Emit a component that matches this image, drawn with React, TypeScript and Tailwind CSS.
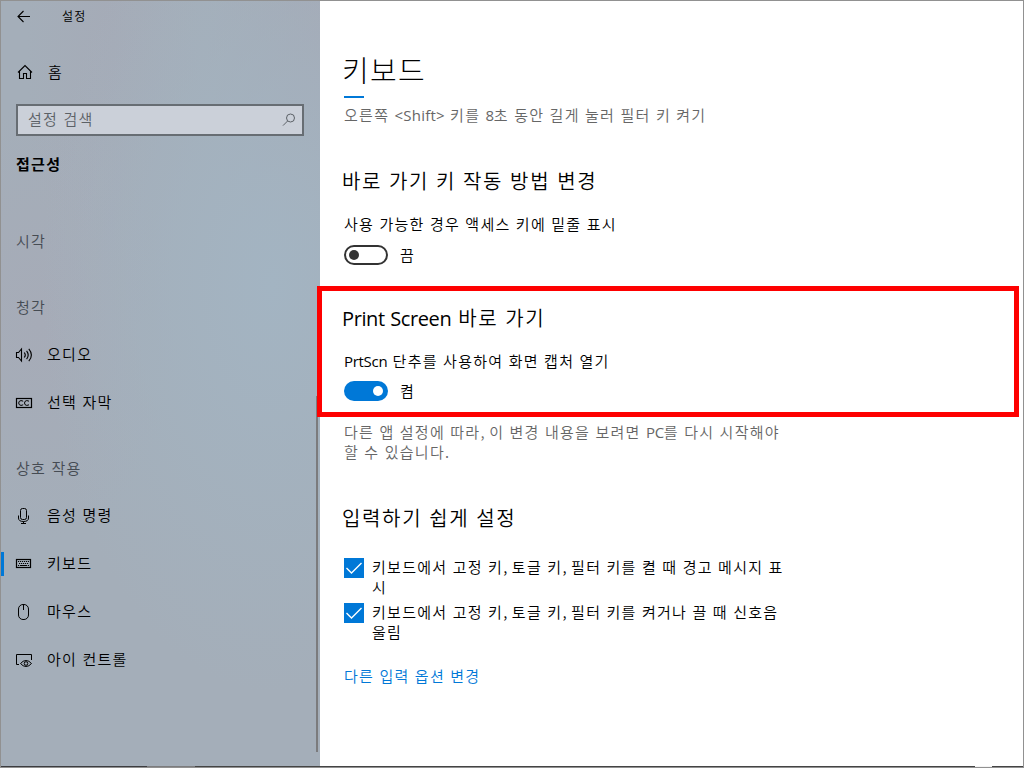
import type { ReactNode } from "react";

const FONT =
  "font-['Noto_Sans_CJK_KR','Noto_Sans_CJK_SC','Liberation_Sans',sans-serif] font-[350] tracking-[0.08em] [word-spacing:0.04em] whitespace-nowrap";

function Latin({ children, wide = false }: { children: ReactNode; wide?: boolean }) {
  return (
    <span
      className={
        wide
          ? "font-['Open_Sans','Noto_Sans',sans-serif] font-normal tracking-[0.015em]"
          : "font-['Open_Sans','Noto_Sans',sans-serif] font-normal tracking-[-0.02em]"
      }
    >
      {children}
    </span>
  );
}

const Comma = () => <span className="tracking-[-0.04em]">,</span>;

function Icon({ children, size = 16 }: { children: ReactNode; size?: number }) {
  return (
    <svg
      width={size}
      height={size}
      viewBox={`0 0 ${size} ${size}`}
      fill="none"
      stroke="currentColor"
      strokeWidth="1"
      className="shrink-0 overflow-visible"
    >
      {children}
    </svg>
  );
}

const BackIcon = () => (
  <Icon>
    <path d="M14 7.5H2.5M7.5 2L2 7.5L7.5 13" strokeWidth="1.1" />
  </Icon>
);

const HomeIcon = () => (
  <Icon>
    <path d="M1 8.5L8 1.5L15 8.5M2.5 7.5V14.5H6.5V9.5H9.5V14.5H13.5V7.5" strokeWidth="1.1" />
  </Icon>
);

const SearchIcon = () => (
  <Icon size={14}>
    <circle cx="8.5" cy="5" r="4" />
    <path d="M5.6 8L1 12.6" />
  </Icon>
);

const AudioIcon = () => (
  <Icon>
    <path d="M0.5 5.5H2.5L5.5 2V14L2.5 10.5H0.5Z" strokeWidth="1.1" />
    <path d="M8.3 5.5Q10.3 8 8.3 10.5M10.6 3.8Q13.8 8 10.6 12.2M12.8 1.8Q18 8 12.8 14.2" strokeWidth="1.1" />
  </Icon>
);

const CaptionIcon = () => (
  <Icon>
    <rect x="0.5" y="3.5" width="15" height="9" strokeWidth="1.2" />
    <path d="M7.2 6.2Q4.8 4.8 3.2 6.4Q2.2 8 3.2 9.6Q4.8 11.2 7.2 9.8M13 6.2Q10.6 4.8 9 6.4Q8 8 9 9.6Q10.6 11.2 13 9.8" />
  </Icon>
);

const MicIcon = () => (
  <Icon>
    <rect x="4.5" y="0.5" width="6" height="11" rx="2" />
    <path d="M2.5 7.5V10Q2.5 13.5 7.5 13.5Q12.5 13.5 12.5 10V7.5M7.5 13.5V15.5M5 15.5H10" />
  </Icon>
);

const KeyboardIcon = () => (
  <Icon>
    <rect x="0.5" y="3.5" width="14" height="8" strokeWidth="1.2" />
    <path d="M2 5.5H13M3 7.5H13" strokeDasharray="1.2 0.8" />
    <path d="M2 9.5H3.2M4 9.5H11M11.8 9.5H13" />
  </Icon>
);

const MouseIcon = () => (
  <Icon>
    <rect x="2.5" y="0.5" width="10" height="15" rx="4.5" />
    <path d="M7.5 0.5V6" />
  </Icon>
);

const EyeControlIcon = () => (
  <Icon>
    <path d="M3 12.5H0.5V2.5H15.5V8" />
    <path d="M4.5 11.5Q7 8.5 10 8.5Q13 8.5 15.5 11.5Q13 14.5 10 14.5Q7 14.5 4.5 11.5Z" />
    <circle cx="10" cy="11.5" r="1.8" />
  </Icon>
);

function NavItem({ icon, label, active = false }: { icon: ReactNode; label: string; active?: boolean }) {
  return (
    <div className="flex h-12 items-center">
      <span className={active ? "h-6 w-[3px] bg-[#0078d7]" : "h-6 w-[3px]"} />
      <span className="ml-3 flex">{icon}</span>
      <span className="ml-[15px] pb-[2px] text-[15px] leading-5">{label}</span>
    </div>
  );
}

function NavHeading({ children }: { children: ReactNode }) {
  return <div className="pl-[15px] text-[15px] leading-5 text-[#454b53]">{children}</div>;
}

function Toggle({ on, label }: { on: boolean; label: string }) {
  return (
    <div className="flex h-5 items-center text-[15px] leading-5">
      {on ? (
        <span className="flex h-5 w-11 items-center justify-end rounded-full bg-[#0078d7] pr-[5px]">
          <span className="size-[10px] rounded-full bg-white" />
        </span>
      ) : (
        <span className="flex h-5 w-11 items-center rounded-full border-2 border-[#333] pl-[3px]">
          <span className="size-[10px] rounded-full bg-[#333]" />
        </span>
      )}
      <span className="ml-3 pb-px">{label}</span>
    </div>
  );
}

function CheckRow({ children }: { children: ReactNode }) {
  return (
    <div className="flex gap-2">
      <svg width="20" height="20" viewBox="0 0 20 20" className="mt-px shrink-0 bg-[#0078d7]">
        <path d="M2.5 10L7.5 15L17.5 5" fill="none" stroke="white" strokeWidth="1.4" />
      </svg>
      <div className="text-[15px] leading-5">{children}</div>
    </div>
  );
}

export default function App() {
  return (
    <div className={`relative flex h-[768px] w-[1024px] flex-col overflow-hidden border border-[#919191] bg-white text-black ${FONT}`}>
      <div className="flex h-[765px]">
        <aside className="flex w-[319px] shrink-0 bg-[#a4aeb9] bg-[radial-gradient(ellipse_at_85%_37%,#a3b4c2_0%,#a3b3c080_35%,transparent_60%),radial-gradient(ellipse_at_12%_42%,#a6abb7_0%,transparent_35%),radial-gradient(ellipse_at_35%_5%,#a5abb7_0%,transparent_30%),radial-gradient(ellipse_at_100%_5%,#a5a9b5_0%,transparent_25%)]">
          <div className="flex w-[315px] flex-col">
            <div className="flex h-[31px] items-center pl-[15px]">
              <BackIcon />
              <span className="ml-[30px] pb-px text-[12px] leading-4">설정</span>
            </div>
            <div className="mt-4 flex h-12 items-center pl-4">
              <HomeIcon />
              <span className="ml-[15px] pb-px text-[15px] leading-5">홈</span>
            </div>
            <div className="ml-[15px] mt-2 flex h-8 w-72 items-center justify-between border-2 border-[#676d73] bg-[#cbd0d9] pl-[10px] pr-[6px] text-[#5c6167]">
              <span className="pb-[3px] text-[15px] leading-5">설정 검색</span>
              <SearchIcon />
            </div>
            <div className="mt-[18px] pl-[15px] text-[15px] font-bold leading-5">접근성</div>
            <div className="mt-[57px]">
              <NavHeading>시각</NavHeading>
            </div>
            <div className="mt-[46px]">
              <NavHeading>청각</NavHeading>
            </div>
            <div className="mt-[14px]">
              <NavItem icon={<AudioIcon />} label="오디오" />
              <NavItem icon={<CaptionIcon />} label="선택 자막" />
            </div>
            <div className="mt-[31px]">
              <NavHeading>상호 작용</NavHeading>
            </div>
            <div className="mt-[14px]">
              <NavItem icon={<MicIcon />} label="음성 명령" />
              <NavItem icon={<KeyboardIcon />} label="키보드" active />
              <NavItem icon={<MouseIcon />} label="마우스" />
              <NavItem icon={<EyeControlIcon />} label="아이 컨트롤" />
            </div>
          </div>
          <div className="mt-[395px] h-[356px] w-[2px] bg-[#7b7b7d]" />
        </aside>

        <main className="flex flex-col pl-6">
          <h1 className="-ml-[2px] mt-[48px] text-[29px] font-light leading-10 tracking-[0.045em]">키보드</h1>
          <div className="mt-[7px] h-[2px] w-5 bg-[#0078d7]" />
          <p className="mt-[7px] text-[15px] leading-5 text-[#666]">
            오른쪽 <Latin wide>&lt;Shift&gt;</Latin> 키를 <Latin>8</Latin>초 동안 길게 눌러 필터 키 켜기
          </p>

          <h2 className="-ml-[2px] mt-[42px] text-[20px] leading-7 tracking-[0.083em] [word-spacing:0.04em]">
            바로 가기 키 작동 방법 변경
          </h2>
          <p className="mt-[19px] text-[15px] leading-5">사용 가능한 경우 액세스 키에 밑줄 표시</p>
          <div className="mt-[11px]">
            <Toggle on={false} label="끔" />
          </div>

          <h2 className="-ml-[2px] mt-[39px] text-[20px] leading-7 tracking-[0.083em] [word-spacing:0.04em]">
            <Latin>Print Screen</Latin> 바로 가기
          </h2>
          <p className="mt-[18px] text-[15px] leading-5">
            <Latin>PrtScn</Latin> 단추를 사용하여 화면 캡처 열기
          </p>
          <div className="mt-[10px]">
            <Toggle on label="켬" />
          </div>
          <div className="mt-[21px] text-[15px] leading-5 text-[#666]">
            <p>
              다른 앱 설정에 따라
              <Comma /> 이 변경 내용을 보려면 <Latin>PC</Latin>를 다시 시작해야
            </p>
            <p>할 수 있습니다.</p>
          </div>

          <h2 className="-ml-[2px] mt-[42px] text-[20px] leading-7 tracking-[0.083em] [word-spacing:0.04em]">
            입력하기 쉽게 설정
          </h2>
          <div className="mt-[25px] flex flex-col gap-[5px]">
            <CheckRow>
              <p>
                키보드에서 고정 키
                <Comma /> 토글 키
                <Comma /> 필터 키를 켤 때 경고 메시지 표
              </p>
              <p>시</p>
            </CheckRow>
            <CheckRow>
              <p>
                키보드에서 고정 키
                <Comma /> 토글 키
                <Comma /> 필터 키를 켜거나 끌 때 신호음
              </p>
              <p>울림</p>
            </CheckRow>
          </div>
          <a className="mt-6 text-[15px] leading-5 text-[#0078d7]">다른 입력 옵션 변경</a>
        </main>
      </div>

      <div className="flex h-px">
        <span className="w-[146px] bg-[#3c3c3f]" />
        <span className="w-12 bg-[#7c7c7e]" />
        <span className="w-[780px] bg-[#444]" />
        <span className="w-[17px] bg-[#f4f4f4]" />
        <span className="flex-1 bg-[#444]" />
      </div>

      <div className="absolute left-[316px] top-[285px] h-[131px] w-[702px] border-[5px] border-[#fe0000]" />
    </div>
  );
}
